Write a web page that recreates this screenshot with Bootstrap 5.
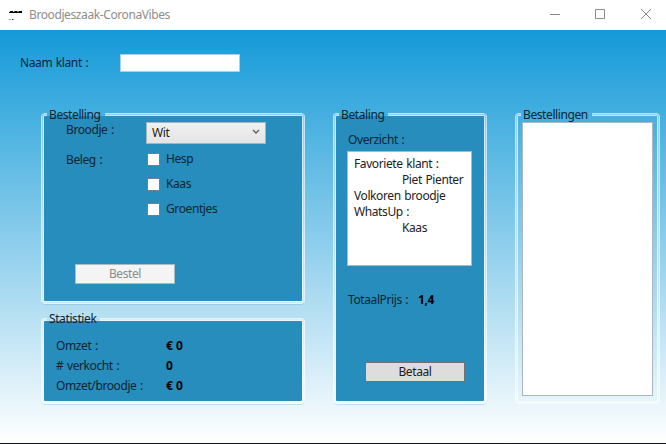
<!DOCTYPE html>
<html lang="nl">
<head>
<meta charset="utf-8">
<title>Broodjeszaak-CoronaVibes</title>
<link rel="stylesheet" href="https://cdn.jsdelivr.net/npm/bootstrap@5.3.0/dist/css/bootstrap.min.css">
<style>
body{width:666px;height:444px;overflow:hidden;font:12px/16px "Noto Sans","Open Sans",sans-serif;letter-spacing:-.4px;word-spacing:.9px;color:#0c2533;background:#fff}
.window{height:444px;border-bottom:1px solid #11151f}
.titlebar{height:30px;padding-left:9px;color:#8d8d8d;background:#fff}
.title-text{padding-left:6px}
.win-btn{width:46px;height:28px}
.client{background:linear-gradient(#149ad8,#fff);padding:24px 6px 0 20px}
.name-label{width:100px;padding-top:1px}
.name-box{width:120px;height:18px;border:1px solid #abcfe2;background:#fff}
.groups{display:grid;grid-template-columns:264px 154px 145px;column-gap:28px;margin:35px 0 0 21px}
.group{min-width:0;border:3px solid transparent;border-radius:4px;background:#278dbc;background-clip:padding-box;box-shadow:0 1px 0 -.5px rgba(39,141,188,.4);border-image:url("data:image/svg+xml,%3Csvg xmlns='http://www.w3.org/2000/svg' width='16' height='16' fill='none' stroke='white'%3E%3Crect x='.5' y='.5' width='15' height='15' rx='3' stroke-opacity='.66'/%3E%3Crect x='1.5' y='1.5' width='13' height='13' rx='2' stroke-opacity='.4'/%3E%3Crect x='2.5' y='2.5' width='11' height='11' rx='1' stroke-opacity='.72'/%3E%3C/svg%3E") 3}
.group.clear{background:none;box-shadow:none}
.group legend{float:none;width:auto;font-size:12px;line-height:15px;height:15px;margin:0 0 0 3px;padding:0 4px 0 2px}
.group.g-stats legend{line-height:13px}
.g-order{height:197px}
.g-stats{height:92px;margin-top:8px}
.g-pay,.g-list{height:297px}
.order-label{width:102px;padding-left:22px}
.combo{width:120px;height:22px;border:1px solid #a5b5be;background:linear-gradient(#f0f0f0,#e5e5e5);padding:0 5px;color:#1c1c1c}
.check{width:13px;height:13px;border:1px solid #707f88;background:#fff;margin-right:6px}
.fills{display:grid;row-gap:9px;padding-left:1px;margin-top:-1px}
.btn-flat{display:block;width:100px;height:20px;border:1px solid #a9bcc6;border-radius:0;padding:0;font-size:12px;line-height:18px;letter-spacing:inherit}
.btn-off{background:#f4f4f4;color:#8b8b8b;margin:47px 0 0 31px}
.btn-on{background:#ddd;color:#1c1c1c;border-color:#707070;margin:54px 0 0 29px}
.stats{padding:9px 0 0 12px}
.stat{height:20px;line-height:20px}
.stat-label{width:110px}
.val{font-weight:700;color:#000}
.pay-body{padding:10px 0 0 11px}
.total{margin-top:26px}
.total-label{width:71px;padding-left:1px}
.overview-label{padding-left:1px}
.overview{width:125px;height:115px;border:1px solid #abb9c2;background:#fff;margin-top:3px;padding:4px 6px;color:#222;white-space:nowrap}
.tabbed{padding-left:48px}
.orders{width:131px;height:274px;border:1px solid #abb6bf;background:#fff;margin-left:4px}
</style>
<script src="https://cdn.jsdelivr.net/npm/bootstrap@5.3.0/dist/js/bootstrap.bundle.min.js"></script>
</head>
<body>
<div class="window d-flex flex-column">
  <header class="titlebar d-flex align-items-center flex-shrink-0">
    <svg width="14" height="12" viewBox="0 0 14 12"><path d="M1 3h3.200M5.300 3h3.200M9.600 3h3.400" stroke="#000" stroke-width="2"/><path d="M0 3.500h12" stroke="#000"/><path d="M.5 10.500h1M3 10.500h1.500" stroke="#333"/></svg>
    <span class="title-text me-auto">Broodjeszaak-CoronaVibes</span>
    <svg class="win-btn" viewBox="0 0 46 28" fill="none" stroke="#8a8a8a"><path d="M22 13.500h10"/></svg>
    <svg class="win-btn" viewBox="0 0 46 28" fill="none" stroke="#8a8a8a"><path d="M21.500 8.500h9v9h-9z"/></svg>
    <svg class="win-btn" viewBox="0 0 46 28" fill="none" stroke="#8a8a8a"><path d="m21 8 10 10m0-10-10 10"/></svg>
  </header>
  <main class="client flex-grow-1">
    <div class="d-flex">
      <label class="name-label">Naam klant :</label>
      <div class="name-box"></div>
    </div>
    <div class="groups">
      <div>
        <fieldset class="group g-order">
          <legend>Bestelling</legend>
          <div class="d-flex">
            <div class="order-label">Broodje :</div>
            <div class="combo d-flex align-items-center justify-content-between">
              <span>Wit</span>
              <svg width="8" height="8" viewBox="0 0 8 8" fill="none" stroke="#606060" stroke-width="1.4"><path d="m1 1 3 3 3-3"/></svg>
            </div>
          </div>
          <div class="d-flex mt-2">
            <div class="order-label">Beleg :</div>
            <div class="fills">
              <div class="d-flex align-items-center"><span class="check"></span>Hesp</div>
              <div class="d-flex align-items-center"><span class="check"></span>Kaas</div>
              <div class="d-flex align-items-center"><span class="check"></span>Groentjes</div>
            </div>
          </div>
          <button class="btn btn-flat btn-off">Bestel</button>
        </fieldset>
        <fieldset class="group g-stats">
          <legend>Statistiek</legend>
          <div class="stats">
            <div class="stat d-flex"><span class="stat-label">Omzet :</span><span class="val">€ 0</span></div>
            <div class="stat d-flex"><span class="stat-label"># verkocht :</span><span class="val">0</span></div>
            <div class="stat d-flex"><span class="stat-label">Omzet/broodje :</span><span class="val">€ 0</span></div>
          </div>
        </fieldset>
      </div>
      <fieldset class="group g-pay">
        <legend>Betaling</legend>
        <div class="pay-body">
          <div class="overview-label">Overzicht :</div>
          <div class="overview">
            <div>Favoriete klant :</div>
            <div class="tabbed">Piet Pienter</div>
            <div>Volkoren broodje</div>
            <div>WhatsUp :</div>
            <div class="tabbed">Kaas</div>
          </div>
          <div class="d-flex total"><span class="total-label">TotaalPrijs :</span><span class="val">1,4</span></div>
        </div>
        <button class="btn btn-flat btn-on">Betaal</button>
      </fieldset>
      <fieldset class="group clear g-list">
        <legend>Bestellingen</legend>
        <div class="orders"></div>
      </fieldset>
    </div>
  </main>
</div>
</body>
</html>
